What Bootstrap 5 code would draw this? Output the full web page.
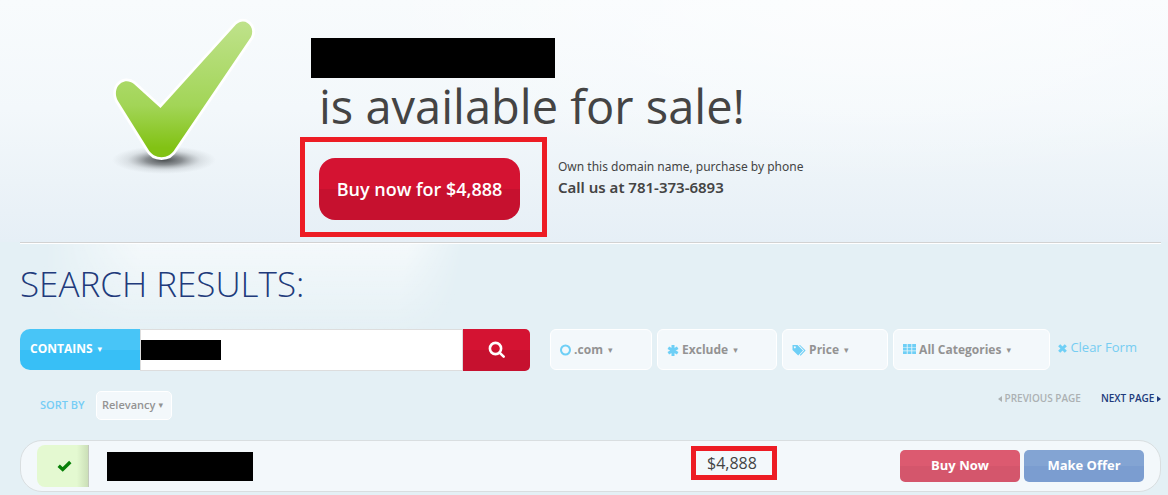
<!DOCTYPE html>
<html lang="en">
<head>
<meta charset="utf-8">
<meta name="viewport" content="width=device-width, initial-scale=1">
<title>Domain available for sale</title>
<link href="https://cdn.jsdelivr.net/npm/bootstrap@5.3.0/dist/css/bootstrap.min.css" rel="stylesheet">
<style>
  body { font-family: "Open Sans", "Noto Sans", sans-serif; background: #e4f0f5; color: #444; }
  .hero { padding-bottom: 5px; background:
      radial-gradient(ellipse 45% 75% at 75% 0, rgba(255,255,255,.6), rgba(255,255,255,0)),
      linear-gradient(#f8fbfd 0, #f3f8fb 45%, #ecf3f8 75%, #e6eff6 100%); }
  .hero-check { width: 300px; padding-left: 90px; }
  .hero-body { padding-top: 38px; }
  .hero-rule { border-top: 1px solid #d2d2d2; border-bottom: 1px solid #fff; margin: 0 7px 0 20px; }
  .redacted { display: block; background: #000; }
  .redacted-title { width: 244px; height: 40px; margin-left: 11px; }
  .redacted-term { width: 80px; height: 20px; left: 1px; top: 11px; z-index: 6; }
  .redacted-domain { width: 146px; height: 29px; margin-left: 18px; }
  .hero-title { font-size: 47px; line-height: 56px; font-weight: 400; padding: 0 0 3px 19px; color: #444; }
  .framed { border: 5px solid #ed1c24; }
  .framed-cta { padding: 16px 22px 12px 14px; }
  .btn-crimson, .btn-crimson:hover { background: linear-gradient(#d41332 50%, #c6112f 50%); color: #fff; border: 0; }
  .btn-cta { width: 201px; height: 62px; border-radius: 16px; font-size: 18px; font-weight: 600; padding: 0; }
  .phone-box { font-family: "Noto Sans", "Open Sans", sans-serif; padding: 20px 0 0 11px; }
  .phone-note { font-size: 12px; line-height: 20px; }
  .phone-number { font-size: 15px; line-height: 20px; font-weight: 600; }
  .results { position: relative; padding: 0 7px 0 20px; }
  .results::before { content: ""; position: absolute; left: 30px; top: 0; width: 430px; height: 95px; z-index: -1;
      background: linear-gradient(rgba(255,255,255,.6), rgba(255,255,255,0));
      -webkit-mask-image: linear-gradient(99deg, transparent 3%, #000 25%, #000 85%, transparent 98%);
      mask-image: linear-gradient(99deg, transparent 3%, #000 25%, #000 85%, transparent 98%); }
  .results-title { font-size: 35px; line-height: 48px; font-weight: 300; color: #213a7b; padding-top: 16px; }
  .search-row { margin-top: 21px; }
  .search-box { width: 510px; height: 42px; }
  .btn-contains, .btn-contains:hover { width: 120px; height: 41px; background: linear-gradient(#48c5f7 50%, #38bff6 50%); color: #fff; border: 0;
      border-radius: 10px 0 0 10px; font-size: 12px; font-weight: 700; padding: 0 10px 2px; text-align: left; }
  .term-input { border: 1px solid #ddd; border-radius: 0; height: 42px; }
  .btn-search { width: 67px; height: 42px; border-radius: 0 5px 5px 0; padding: 0 0 4px; }
  .caret { font-size: 9px; line-height: 9px; font-family: "DejaVu Sans", sans-serif; font-weight: 400; margin-left: 5px; vertical-align: 1px; }
  .filters { gap: 5px; margin-left: 20px; }
  .btn-filter, .btn-filter:hover { height: 41px; background: #f3f8fb; border: 1px solid #fff; border-radius: 6px; color: #939393;
      font-size: 12px; font-weight: 700; padding: 0 9px; text-align: left; white-space: nowrap; }
  .btn-filter svg { fill: #6ecff6; }
  .w-tld { width: 102px; } .w-exclude { width: 120px; } .w-price { width: 106px; } .w-cat { width: 157px; }
  .clear-link { color: #76cdf2; font-size: 13px; line-height: 18px; margin: 9px 0 0 8px; text-decoration: none; white-space: nowrap; }
  .sort-row { margin-top: 20px; padding-left: 20px; }
  .sort-label { color: #76cdf5; font-size: 11px; font-weight: 600; width: 56px; }
  .btn-sort, .btn-sort:hover { width: 76px; height: 29px; font-size: 11px; font-weight: 600; padding: 0 5px; border-radius: 5px; }
  .btn-sort .caret { margin-left: 3px; }
  .pager-link { font-size: 10px; line-height: 15px; font-weight: 600; text-decoration: none; color: #213a7b; }
  .pager-link.is-off { color: #acb1b3; }
  .result { margin-top: 20px; height: 52px; border: 1px solid #d9dee0; border-radius: 22px; background: #f3f8fb; padding: 0 16px; }
  .result-ok { width: 52px; height: 42px; padding-left: 3px; background: linear-gradient(90deg, #e4f9d1 78%, #cbdfb7); border-right: 1px solid #c3c9bd;
      border-radius: 8px 0 0 8px; }
  .price-cell { width: 209px; padding-top: 5px; }
  .framed-price { width: 86px; height: 34px; font-size: 16px; line-height: 24px; padding-left: 11px; }
  .btn-row, .btn-row:hover { width: 120px; height: 32px; border: 0; border-radius: 5px; font-size: 13px; font-weight: 700; padding: 0; color: #fff; }
  .btn-rose, .btn-rose:hover { background: linear-gradient(#dc5a70 50%, #d4566c 50%); }
  .btn-steel, .btn-steel:hover { background: linear-gradient(#83a4d3 50%, #7b9dd0 50%); }
</style>
</head>
<body>
<header class="hero d-flex align-items-start">
  <div class="hero-check flex-shrink-0">
    <svg width="190" height="190" viewBox="0 0 190 190" aria-hidden="true">
      <defs>
        <linearGradient id="leaf" x1="0" y1="0" x2="0" y2="1">
          <stop offset="0" stop-color="#bfe28b"/><stop offset=".62" stop-color="#a2d557"/><stop offset=".93" stop-color="#82c214"/><stop offset="1" stop-color="#82c214"/>
        </linearGradient>
        <radialGradient id="shade"><stop offset="0" stop-color="#414547" stop-opacity=".95"/><stop offset=".35" stop-color="#55595c" stop-opacity=".65"/><stop offset=".7" stop-color="#90969a" stop-opacity=".22"/><stop offset="1" stop-color="#a0a8ac" stop-opacity="0"/></radialGradient>
      </defs>
      <ellipse cx="74" cy="160" rx="52" ry="14" fill="url(#shade)"/>
      <path d="M44 84 L70.500 108 L146 24.500 C155 16 166 27 161 37 L85 149 C79 160 64 160 58 149 L28 101 C21 87 34 76 44 84Z" fill="url(#leaf)" stroke="#fff" stroke-width="5.500" stroke-linejoin="round" paint-order="stroke"/>
    </svg>
  </div>
  <div class="hero-body flex-grow-1">
    <span class="redacted redacted-title"></span>
    <h1 class="hero-title m-0">is available for sale!</h1>
    <div class="d-flex align-items-start">
      <div class="framed framed-cta"><button type="button" class="btn btn-crimson btn-cta">Buy now for $4,888</button></div>
      <div class="phone-box">
        <div class="phone-note">Own this domain name, purchase by phone</div>
        <div class="phone-number">Call us at 781-373-6893</div>
      </div>
    </div>
  </div>
</header>
<div class="hero-rule"></div>
<main class="results">
  <h2 class="results-title m-0">SEARCH RESULTS:</h2>
  <form class="search-row d-flex align-items-start">
    <div class="search-box d-flex align-items-start flex-shrink-0">
      <button type="button" class="btn btn-contains flex-shrink-0">CONTAINS<span class="caret">▾</span></button>
      <div class="position-relative flex-grow-1">
        <input type="text" class="form-control term-input" aria-label="Search term">
        <span class="redacted redacted-term position-absolute"></span>
      </div>
      <button type="button" class="btn btn-crimson btn-search flex-shrink-0" aria-label="Search">
        <svg width="18" height="18" viewBox="0 0 18 18" fill="none" stroke="#fff" stroke-width="2.600" stroke-linecap="round"><circle cx="7.500" cy="7.500" r="5.600"/><path d="M11.800 11.800 15.700 15.700"/></svg>
      </button>
    </div>
    <div class="filters d-flex">
      <button type="button" class="btn btn-filter w-tld"><svg width="11" height="13" viewBox="0 0 11 13"><path fill="none" stroke="#6ecff6" stroke-width="2" d="M5.500 1.500a4.500 4.500 0 1 0 0 9a4.500 4.500 0 1 0 0-9z"/></svg> .com<span class="caret">▾</span></button>
      <button type="button" class="btn btn-filter w-exclude"><svg width="12" height="13" viewBox="0 0 12 13"><path fill="none" stroke="#6ecff6" stroke-width="3" d="M6 1v11M1.300 3.700l9.400 5.600M1.300 9.300l9.400-5.600"/></svg> Exclude<span class="caret">▾</span></button>
      <button type="button" class="btn btn-filter w-price"><svg width="14" height="13" viewBox="0 0 14 13"><path fill-rule="evenodd" d="M.500 1h5L11 6.600 6.200 11.500.500 6zM2.800 2.300a1 1 0 1 0 .1 0z"/><path d="M7 1h1L13.600 6.600 8.600 11.700 7.800 11l4.300-4.400z"/></svg> Price<span class="caret">▾</span></button>
      <button type="button" class="btn btn-filter w-cat"><svg width="13" height="12" viewBox="0 0 13 12"><path d="M0 0h3.800v2.900H0zM4.600 0h3.800v2.900H4.600zM9.200 0h3.800v2.900H9.200zM0 3.600h3.800v2.900H0zM4.600 3.600h3.800v2.900H4.600zM9.200 3.600h3.800v2.900H9.200zM0 7.200h3.800v2.900H0zM4.600 7.200h3.800v2.900H4.600zM9.200 7.200h3.800v2.900H9.200z"/></svg> All Categories<span class="caret">▾</span></button>
    </div>
    <a href="#" class="clear-link"><svg width="9" height="9" viewBox="0 0 9 9"><path d="M1.200 1.200l6.600 6.600M7.800 1.200L1.200 7.800" stroke="#6ecff6" stroke-width="3"/></svg> Clear Form</a>
  </form>
  <div class="sort-row d-flex align-items-start justify-content-between">
    <div class="d-flex align-items-center">
      <span class="sort-label">SORT BY</span>
      <button type="button" class="btn btn-filter btn-sort">Relevancy<span class="caret">▾</span></button>
    </div>
    <nav class="d-flex" aria-label="Result pages">
      <a href="#" class="pager-link is-off me-3 pe-1"><svg width="4" height="6" viewBox="0 0 4 6"><path d="M4 0v6L0 3z" fill="#acb1b3"/></svg> PREVIOUS PAGE</a>
      <a href="#" class="pager-link">NEXT PAGE <svg width="4" height="6" viewBox="0 0 4 6"><path d="M0 0v6l4-3z" fill="#213a7b"/></svg></a>
    </nav>
  </div>
  <div class="result d-flex align-items-center">
    <div class="result-ok d-flex align-items-center justify-content-center"><svg width="15" height="12" viewBox="0 0 15 12"><path d="M1.700 5.800l4 3.700L13.300 2" fill="none" stroke="#078007" stroke-width="3.400"/></svg></div>
    <span class="redacted redacted-domain"></span>
    <div class="price-cell align-self-start ms-auto"><div class="framed framed-price">$4,888</div></div>
    <div class="d-flex gap-1">
      <button type="button" class="btn btn-row btn-rose">Buy Now</button>
      <button type="button" class="btn btn-row btn-steel">Make Offer</button>
    </div>
  </div>
</main>
<script src="https://cdn.jsdelivr.net/npm/bootstrap@5.3.0/dist/js/bootstrap.bundle.min.js"></script>
</body>
</html>
